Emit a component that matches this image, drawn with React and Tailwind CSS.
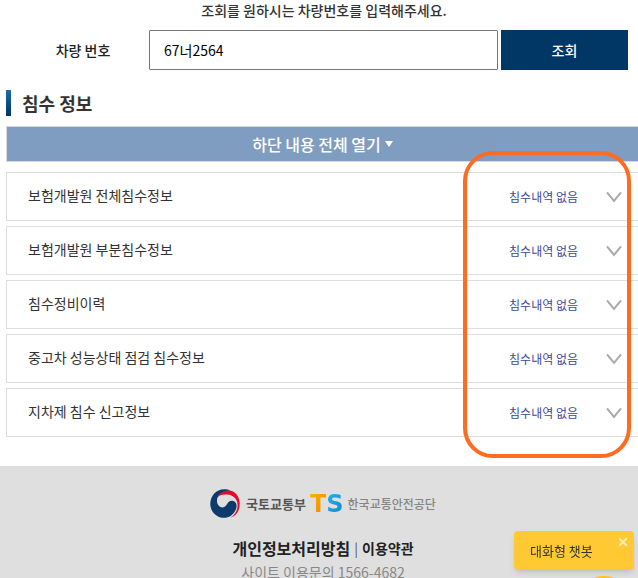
import { useState } from 'react';

const floodItems = [
    { id: 'total', name: '보험개발원 전체침수정보', status: '침수내역 없음' },
    { id: 'partial', name: '보험개발원 부분침수정보', status: '침수내역 없음' },
    { id: 'repair', name: '침수정비이력', status: '침수내역 없음' },
    { id: 'inspection', name: '중고차 성능상태 점검 침수정보', status: '침수내역 없음' },
    { id: 'local', name: '지차제 침수 신고정보', status: '침수내역 없음' },
];

const ChevronDown = () => (
    <svg viewBox="0 0 16 12" className="h-3 w-4 shrink-0" fill="none" stroke="#aaaaaa" strokeWidth="2" aria-hidden="true">
        <path d="M1 1.3 L8 10 L15 1.3" />
    </svg>
);

const SearchForm = () => {
    const [carNumber, setCarNumber] = useState('67너2564');

    return (
        <form className="mt-[10px] flex h-10 items-stretch gap-[3px] pl-5 pr-[10px]" onSubmit={(e) => e.preventDefault()}>
            <label htmlFor="car-number" className="flex w-[126px] shrink-0 items-center justify-center text-sm font-medium text-[#222222]">
                차량 번호
            </label>
            <input
                id="car-number"
                type="text"
                value={carNumber}
                onChange={(e) => setCarNumber(e.target.value)}
                className="min-w-0 flex-1 rounded-[1px] border border-[#767676] bg-white px-[14px] text-sm text-black"
            />
            <button type="submit" className="w-[127px] shrink-0 bg-[#003764] text-sm font-medium text-white">
                조회
            </button>
        </form>
    );
};

const FloodList = () => (
    <ul className="mt-[10px] flex flex-col gap-[5px]">
        {floodItems.map((item) => (
            <li key={item.id}>
                <button type="button" className="flex h-[49px] w-full items-center border border-r-0 border-[#dddddd] bg-white pl-[21px] pr-4 text-left">
                    <span className="flex-1 pb-1 text-sm text-[#333333]">{item.name}</span>
                    <span className="mr-7 text-xs text-[#3d4a94]">{item.status}</span>
                    <ChevronDown />
                </button>
            </li>
        ))}
    </ul>
);

// Government taegeuk mark
const GovLogo = () => (
    <svg viewBox="0 0 30 30" className="size-[30px]" aria-hidden="true">
        <path d="M7 9 C9 4 13 1 18.5 1.2 C25.5 1.6 29.8 8 29.7 15 C29.6 21.5 26.5 26.8 20.5 28.8 C25.5 25.5 27.8 20.5 27.6 15.5 C27.2 9.5 22.5 6 17 5.6 C12.5 5.3 8.8 6.3 7 9Z" fill="#e5092f" />
        <path d="M20.5 1.5 C14.5 1 9 4 7.5 8.6 C5.8 14 8.6 18.4 12.6 18.4 C17.4 18.4 16.8 11.8 21.7 11.8 C26 11.8 27.7 16 25.8 20.5 C23.4 26.3 18 29.4 12.5 28.8 C5.6 28 0.3 22 0.3 14.8 C0.3 6.8 6.3 0.3 14 0.2 C16.4 0.2 18.6 0.6 20.5 1.5Z" fill="#0b3a6b" />
    </svg>
);

const Footer = () => (
    <footer className="mt-[29px] flex-1 bg-[#dfdfdf] pt-[23px]">
        <div className="flex items-center justify-center pl-2">
            <GovLogo />
            <span className="ml-[6px] text-[13px] font-bold text-[#555555]">국토교통부</span>
            <span className="ml-1 flex font-['DejaVu_Sans',sans-serif] text-[24px] leading-6 font-bold">
                <span className="bg-linear-to-br from-[#fbb600] to-[#f08300] bg-clip-text text-transparent">T</span>
                <span className="bg-linear-to-br from-[#29b5e8] to-[#0b86d0] bg-clip-text text-transparent">S</span>
            </span>
            <span className="ml-1 text-[12px] font-medium text-[#858585]">한국교통안전공단</span>
        </div>
        <p className="mt-[17px] flex items-center justify-center pl-2 leading-6 text-[#222222]">
            <a href="#privacy" className="text-base leading-6 font-bold">개인정보처리방침</a>
            <span className="mx-1 text-sm text-[#555555]">|</span>
            <a href="#terms" className="text-sm leading-6 font-bold">이용약관</a>
        </p>
        <p className="pl-2 text-center text-sm leading-6 text-[#888888]">사이트 이용문의 1566-4682</p>
    </footer>
);

const Chatbot = () => (
    <div className="fixed right-1 bottom-2 h-[39px] w-[120px]">
        <button type="button" className="flex size-full items-center rounded bg-[#ffc933] pl-4 text-[13px] text-[#333333] shadow-md">
            대화형 챗봇
        </button>
        <button type="button" aria-label="닫기" className="absolute top-[6px] right-[6px]">
            <svg viewBox="0 0 10 10" className="size-[10px]" stroke="#ffedb5" strokeWidth="2" aria-hidden="true">
                <path d="M1.2 1.2 L8.8 8.8 M8.8 1.2 L1.2 8.8" />
            </svg>
        </button>
        <button type="button" aria-label="챗봇 열기" className="absolute top-[45px] right-0 size-15 rounded-full bg-[#ffc107]" />
    </div>
);

const App = () => {
    return (
        <div className="relative flex h-screen flex-col overflow-hidden bg-white font-['Noto_Sans_CJK_KR','Noto_Sans',sans-serif]">
            <main>
                <p className="pl-[10px] text-center text-sm font-medium text-[#333333]">조회를 원하시는 차량번호를 입력해주세요.</p>
                <SearchForm />
                <section className="relative mt-5 pl-[6px]">
                    <h2 className="flex h-[26px] items-center gap-[11px] text-lg font-bold text-[#333333]">
                        <span className="h-full w-[5px] bg-linear-to-b from-[#1b6bab] to-[#003764]" />
                        침수 정보
                    </h2>
                    <button type="button" className="mt-[10px] flex h-9 w-full items-center justify-center gap-1 border border-r-0 border-[#d5d9dd] bg-[#7f9dc0] text-base font-medium text-white">
                        하단 내용 전체 열기
                        <svg viewBox="0 0 8 6" className="h-[6px] w-2" fill="currentColor" aria-hidden="true">
                            <path d="M0 0 H8 L4 6 Z" />
                        </svg>
                    </button>
                    <FloodList />
                    {/* Highlight over the result column */}
                    <div className="pointer-events-none absolute top-[61px] right-[7px] -bottom-[21px] w-[168px] rounded-[30px] border-4 border-[#ff6b20]" />
                </section>
            </main>
            <Footer />
            <Chatbot />
        </div>
    );
};

export default App;
